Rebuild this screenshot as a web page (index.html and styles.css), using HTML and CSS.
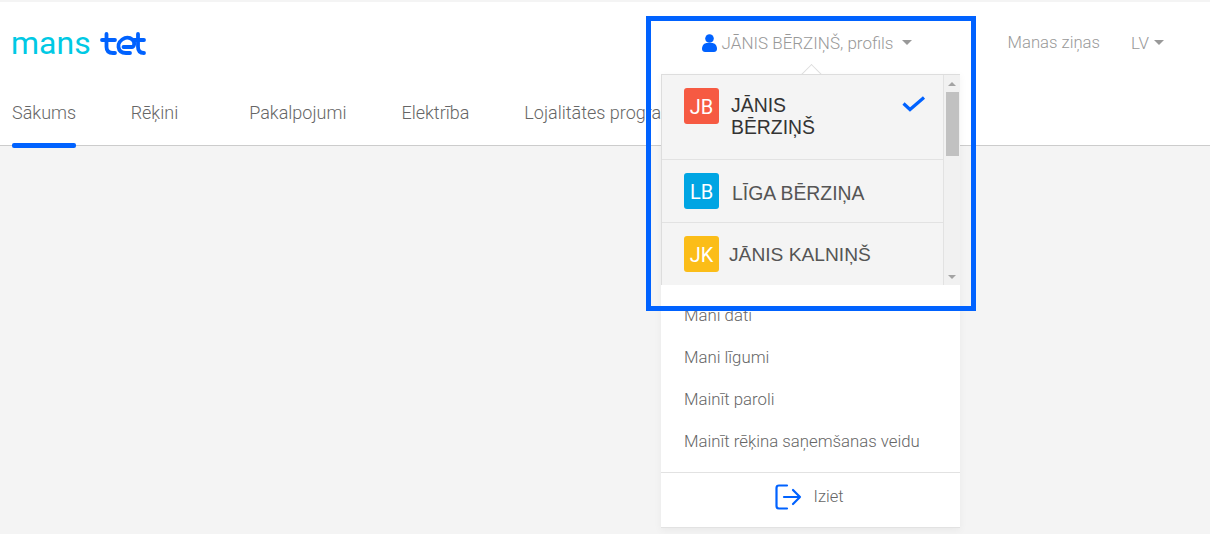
FILE: index.html
```html
<!DOCTYPE html>
<html lang="lv">
<head>
<meta charset="utf-8">
<title>Mans Tet</title>
<link rel="stylesheet" href="styles.css">
</head>
<body>
<header class="header">
  <div class="topbar">
    <a class="logo" href="#">
      <span class="logo-mans">mans</span>
      <svg class="logo-tet" width="46" height="24" viewBox="0 0 46 24" role="img" aria-label="tet" fill="none" stroke="#0062ff" stroke-width="3.800" stroke-linecap="round" stroke-linejoin="round">
        <path d="M2 8H15M6.500 2V15Q6.500 21 13 21H15"/>
        <path d="M23.500 15H32C34 15 34.500 12 34 10C32.500 6 28 5 25 6C20 8 18 12 18.500 15C19 19 22 21 26 21H30"/>
        <path d="M34 8H44M38 2V15Q38 21 44 21"/>
      </svg>
    </a>
    <div class="top-links">
      <a class="user-link" href="#">
        <svg class="user-icon" width="15" height="18" viewBox="0 0 15 18" fill="#0062ff"><circle cx="7.500" cy="4.500" r="4.300"/><path d="M0 15C0 11 2.500 9 5 9H10C12.500 9 15 11 15 15C15 17 13.500 18 12 18H3C1.500 18 0 17 0 15Z"/></svg>
        <span>JĀNIS BĒRZIŅŠ, profils</span>
        <i class="caret caret-user"></i>
      </a>
      <a class="top-link" href="#">Manas ziņas</a>
      <a class="top-link lang" href="#">LV<i class="caret"></i></a>
    </div>
  </div>
  <nav class="nav">
    <a class="nav-item active" href="#">Sākums</a>
    <a class="nav-item w-rekini" href="#">Rēķini</a>
    <a class="nav-item" href="#">Pakalpojumi</a>
    <a class="nav-item" href="#">Elektrība</a>
    <a class="nav-item" href="#">Lojalitātes programma</a>
  </nav>
</header>

<div class="dropdown">
  <i class="notch"></i>
  <div class="profiles">
    <ul class="profile-list">
      <li class="profile selected">
        <span class="avatar red">JB</span>
        <span class="profile-name dark">JĀNIS BĒRZIŅŠ</span>
        <svg class="check" width="24" height="16" viewBox="0 0 24 16" fill="none" stroke="#0062ff" stroke-width="3.200"><path d="M1.500 7.500L8 13.500L22 1.500"/></svg>
      </li>
      <li class="profile second">
        <span class="avatar blue">LB</span>
        <span class="profile-name">LĪGA BĒRZIŅA</span>
      </li>
      <li class="profile third">
        <span class="avatar yellow">JK</span>
        <span class="profile-name tight">JĀNIS KALNIŅŠ</span>
      </li>
    </ul>
    <div class="scrollbar">
      <i class="arrow-up"></i>
      <i class="thumb"></i>
      <i class="arrow-down"></i>
    </div>
  </div>
  <ul class="menu">
    <li><a href="#">Mani dati</a></li>
    <li><a href="#">Mani līgumi</a></li>
    <li><a href="#">Mainīt paroli</a></li>
    <li><a href="#">Mainīt rēķina saņemšanas veidu</a></li>
  </ul>
  <a class="logout" href="#">
    <svg width="27" height="26" viewBox="0 0 27 26" fill="none" stroke="#0062ff" stroke-width="2.200" stroke-linecap="round" stroke-linejoin="round"><path d="M12 1.500H4Q1.500 1.500 1.500 4V22Q1.500 24.500 4 24.500H12"/><path d="M9 13H25M18 6L25 13L18 20"/></svg>
    <span>Iziet</span>
  </a>
</div>

<div class="highlight"></div>
</body>
</html>
```
FILE: styles.css
```css
* { box-sizing: border-box; }
html, body { margin: 0; height: 100%; }
body {
  background: #f4f4f4;
  font-family: Roboto, "Liberation Sans", sans-serif;
  font-weight: 300;
  color: #666;
  overflow: hidden;
  padding-top: 2px;
}
a { color: inherit; text-decoration: none; }
ul { list-style: none; margin: 0; padding: 0; }
i { display: block; }

.header {
  background: #fff;
  height: 144px;
  border-bottom: 1px solid #ccc;
  display: flex;
  flex-direction: column;
}
.topbar {
  display: flex;
  align-items: center;
  justify-content: space-between;
  height: 82px;
  padding: 0 46px 0 11px;
}
.logo { display: flex; align-items: center; gap: 9px; }
.logo-mans {
  font-family: Roboto, sans-serif;
  font-weight: 400;
  font-size: 32px;
  line-height: 36px;
  color: #00c9e4;
}
.logo-tet { margin-top: 2px; }
.top-links {
  display: flex;
  align-items: center;
  font-size: 17px;
  color: #999;
}
.user-link { display: flex; align-items: center; gap: 5px; margin-right: 96px; }
.user-icon { flex: none; }
.top-link { font-size: 16.700px; }
.top-link + .top-link { margin-left: 31px; }
.lang { display: flex; align-items: center; gap: 5px; font-size: 17px; }
.caret {
  width: 0;
  height: 0;
  border-left: 5px solid transparent;
  border-right: 5px solid transparent;
  border-top: 5px solid #999;
}
.caret-user { margin-left: 3px; }

.nav {
  display: flex;
  padding-left: 12px;
  font-size: 18px;
  color: #666;
  height: 62px;
}
.nav-item {
  position: relative;
  line-height: 60px;
  margin-right: 55px;
  white-space: nowrap;
}
.nav-item.active { margin-right: 54.500px; }
.w-rekini { margin-right: 71px; }
.nav-item.active::after {
  content: "";
  position: absolute;
  left: 0;
  right: 0;
  bottom: -3px;
  height: 5px;
  border-radius: 2px;
  background: #0062ff;
}

.dropdown {
  position: absolute;
  left: 661px;
  top: 74px;
  width: 299px;
  background: #fff;
  border-bottom: 1px solid #e2e2e2;
  box-shadow: 0 2px 8px rgba(0, 0, 0, .05);
}
.notch {
  position: absolute;
  left: 143px;
  top: -7px;
  width: 15px;
  height: 15px;
  background: #fff;
  border-top: 1px solid #ddd;
  border-left: 1px solid #ddd;
  transform: rotate(45deg);
}
.profiles {
  position: relative;
  display: flex;
  height: 211px;
  background: #f4f4f4;
  border-top: 1px solid #ddd;
  border-left: 1px solid #ddd;
}
.profile-list { width: 282px; border-right: 1px solid #e2e2e2; }
.profile {
  display: flex;
  align-items: center;
  padding-left: 22px;
  height: 63px;
  border-bottom: 1px solid #e2e2e2;
  font-family: "Liberation Sans", Arial, sans-serif;
  font-weight: 400;
  font-size: 19.400px;
  color: #555;
}
.selected {
  position: relative;
  height: 85px;
  align-items: flex-start;
  padding-top: 13px;
}
.third { border-bottom: 0; font-size: 19.200px; }
.avatar {
  flex: none;
  width: 35px;
  height: 36px;
  margin-right: 13px;
  border-radius: 3px;
  color: #fff;
  font-family: Roboto, sans-serif;
  font-weight: 400;
  font-size: 20px;
  line-height: 38px;
  text-align: center;
}
.red { background: #f65a42; }
.blue { background: #00a5e3; }
.yellow { background: #fbbd18; }
.profile-name { line-height: 22px; }
.second .profile-name { margin-top: 4px; }
.third .avatar { margin-top: -2px; }
.dark { color: #333; width: 120px; margin-top: 6px; margin-left: -1px; }
.tight { margin-left: -3px; }
.check { position: absolute; right: 17px; top: 21px; }
.scrollbar {
  position: relative;
  width: 16px;
  background: #f1f1f1;
  display: flex;
  flex-direction: column;
  align-items: center;
}
.thumb { width: 13px; height: 64px; margin-top: 6px; background: #c1c1c1; }
.arrow-up, .arrow-down {
  width: 0;
  height: 0;
  border-left: 4px solid transparent;
  border-right: 4px solid transparent;
}
.arrow-up { border-bottom: 4px solid #a3a3a3; margin-top: 7px; }
.arrow-down { border-top: 4px solid #a3a3a3; margin-top: auto; margin-bottom: 6px; }

.menu {
  padding: 8px 0 11px 23px;
  font-size: 16.800px;
  color: #666;
  border-bottom: 1px solid #e2e2e2;
}
.menu li { height: 42px; line-height: 44px; }
.logout {
  display: flex;
  align-items: center;
  justify-content: center;
  height: 54px;
  gap: 12px;
  font-size: 16.500px;
  padding: 0 3px 6px 0;
}
.logout span { margin-top: -2px; }
.highlight {
  position: absolute;
  left: 646px;
  top: 16px;
  width: 330px;
  height: 295px;
  border: 5px solid #0062ff;
  pointer-events: none;
}
```
